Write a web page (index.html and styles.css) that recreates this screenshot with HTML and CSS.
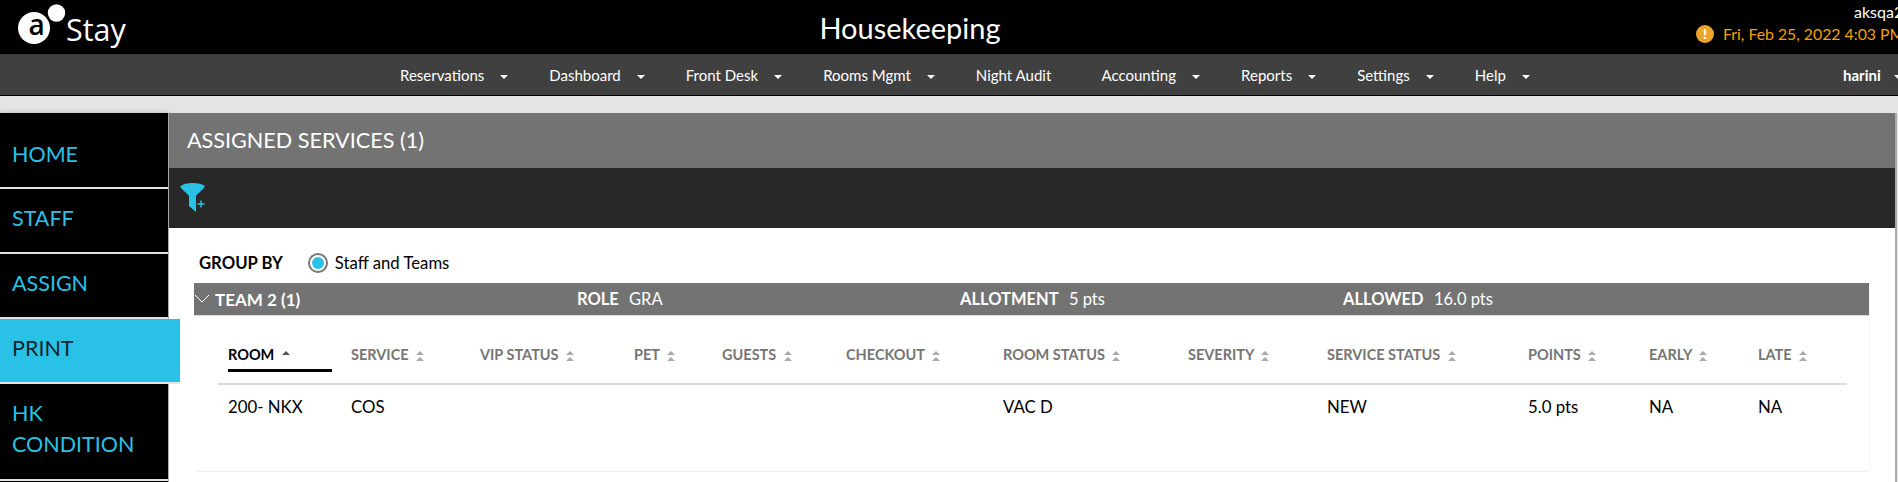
FILE: index.html
```html
<!DOCTYPE html>
<html lang="en">
<head>
    <meta charset="UTF-8">
    <title>Housekeeping</title>
    <link rel="stylesheet" href="styles.css">
</head>
<body>
    <header class="top-bar">
        <div class="logo">
            <svg class="logo-mark" width="56" height="46" viewBox="0 0 56 46">
                <circle cx="16" cy="25" r="16" fill="#fff"/>
                <circle cx="38.5" cy="10" r="11" fill="#000"/>
                <circle cx="38.5" cy="10" r="8.7" fill="#fff"/>
                <text x="10.5" y="32" class="logo-a">a</text>
            </svg>
            <span class="logo-text">Stay</span>
        </div>
        <div class="page-title">Housekeeping</div>
        <div class="top-info">
            <div class="site-name">aksqa2</div>
            <div class="date-line">
                <span class="alert-icon">!</span>
                <span>Fri, Feb 25, 2022 4:03 PM</span>
            </div>
        </div>
    </header>

    <nav class="nav-bar">
        <ul class="nav-menu">
            <li>Reservations <i class="caret"></i></li>
            <li>Dashboard <i class="caret"></i></li>
            <li>Front Desk <i class="caret"></i></li>
            <li>Rooms Mgmt <i class="caret"></i></li>
            <li class="nav-plain">Night Audit</li>
            <li>Accounting <i class="caret"></i></li>
            <li>Reports <i class="caret"></i></li>
            <li>Settings <i class="caret"></i></li>
            <li>Help <i class="caret"></i></li>
        </ul>
        <div class="nav-user">harini <i class="caret"></i></div>
    </nav>

    <div class="layout">
        <aside class="side-menu">
            <a class="side-item side-home">HOME</a>
            <a class="side-item">STAFF</a>
            <a class="side-item">ASSIGN</a>
            <a class="side-item active">PRINT</a>
            <a class="side-item side-tall">HK<br>CONDITION</a>
        </aside>

        <main class="content">
            <div class="content-title">ASSIGNED SERVICES (1)</div>
            <div class="toolbar">
                <svg width="28" height="32" viewBox="0 0 28 32">
                    <path d="M2 4.5 C7 0 22 0 27 4 C25 8 20 11 18 14 L18 30 L11 24 L11 14 C9 11 4 8 2 4.5 Z" fill="#29c2e6"/>
                    <path d="M23 18.5 V25.5 M19.5 22 H26.5" stroke="#29c2e6" stroke-width="1.4" fill="none"/>
                </svg>
            </div>
            <section class="panel">
                <div class="group-by">
                    <span class="group-label">GROUP BY</span>
                    <span class="radio"></span>
                    <span>Staff and Teams</span>
                </div>
                <div class="card">
                    <div class="team-bar">
                        <svg class="chevron" width="16" height="10" viewBox="0 0 16 10">
                            <path d="M1 1 L8 8 L15 1" stroke="#fff" stroke-width="1" fill="none"/>
                        </svg>
                        <b class="team-name">TEAM 2 (1)</b>
                        <span class="team-role"><b>ROLE</b> GRA</span>
                        <span class="team-allot"><b>ALLOTMENT</b> 5 pts</span>
                        <span class="team-allowed"><b>ALLOWED</b> 16.0 pts</span>
                    </div>
                    <table class="rooms">
                        <colgroup>
                            <col class="c1"><col class="c2"><col class="c3"><col class="c4">
                            <col class="c5"><col class="c6"><col class="c7"><col class="c8">
                            <col class="c9"><col class="c10"><col class="c11"><col class="c12">
                        </colgroup>
                        <thead>
                            <tr>
                                <th class="sorted"><span class="room-head">ROOM <i class="sort-up"></i></span></th>
                                <th>SERVICE <i class="sort"></i></th>
                                <th>VIP STATUS <i class="sort"></i></th>
                                <th>PET <i class="sort"></i></th>
                                <th>GUESTS <i class="sort"></i></th>
                                <th>CHECKOUT <i class="sort"></i></th>
                                <th>ROOM STATUS <i class="sort"></i></th>
                                <th>SEVERITY <i class="sort"></i></th>
                                <th>SERVICE STATUS <i class="sort"></i></th>
                                <th>POINTS <i class="sort"></i></th>
                                <th>EARLY <i class="sort"></i></th>
                                <th>LATE <i class="sort"></i></th>
                            </tr>
                        </thead>
                        <tbody>
                            <tr>
                                <td>200- NKX</td>
                                <td>COS</td>
                                <td></td>
                                <td></td>
                                <td></td>
                                <td></td>
                                <td>VAC D</td>
                                <td></td>
                                <td>NEW</td>
                                <td>5.0 pts</td>
                                <td>NA</td>
                                <td>NA</td>
                            </tr>
                        </tbody>
                    </table>
                </div>
            </section>
        </main>
    </div>
</body>
</html>
```

FILE: styles.css
```css
html, body {
    height: 100%;
}
body {
    margin: 0;
    overflow: hidden;
    background-color: #e4e4e4;
    font-family: Lato, sans-serif;
    font-size: 16px;
    color: #000;
}

/* top bar */
.top-bar {
    height: 54px;
    background-color: #000;
    color: #fff;
    display: grid;
    grid-template-columns: 1fr auto 1fr;
    align-items: center;
}
.logo {
    display: flex;
    align-items: flex-start;
    padding-left: 18px;
    height: 54px;
}
.logo-mark {
    margin-top: 3px;
}
.logo-a {
    font-family: "Open Sans", sans-serif;
    font-size: 28px;
    font-weight: 600;
    fill: #000;
}
.logo-text {
    font-family: "Open Sans", sans-serif;
    font-size: 30.5px;
    margin-left: -8px;
    margin-top: 9px;
    line-height: 40px;
}
.page-title {
    font-size: 29px;
    padding-right: 78px;
}
.top-info {
    justify-self: end;
    width: 280px;
    margin-right: -3px;
    height: 54px;
    overflow: hidden;
    white-space: nowrap;
}
.site-name {
    font-size: 16px;
    line-height: 24px;
    padding-left: 233px;
}
.date-line {
    display: flex;
    align-items: center;
    gap: 9px;
    font-size: 15.8px;
    color: #f5a000;
    padding-left: 75px;
}
.alert-icon {
    flex: none;
    width: 18px;
    height: 18px;
    border-radius: 50%;
    background-color: #eaa62c;
    color: #fff;
    font-size: 14px;
    font-weight: 900;
    line-height: 18px;
    text-align: center;
}

/* nav */
.nav-bar {
    height: 41px;
    background-color: #404040;
    border-bottom: 1px solid #000;
    color: #fff;
    font-size: 15px;
    display: flex;
    align-items: center;
    position: relative;
}
.nav-menu {
    list-style: none;
    margin: 0;
    padding: 0 0 0 400px;
    display: flex;
    gap: 41.2px;
}
.nav-plain {
    margin-right: 9px;
}
.nav-user {
    margin-left: auto;
    margin-right: -5px;
    width: 60px;
    font-weight: 700;
    white-space: nowrap;
}
.caret {
    display: inline-block;
    width: 0;
    height: 0;
    margin-left: 12px;
    vertical-align: middle;
    border-left: 4px solid transparent;
    border-right: 4px solid transparent;
    border-top: 4px solid #fff;
}
.nav-user .caret {
    margin-left: 10px;
}

/* layout */
.layout {
    display: flex;
    margin-top: 17px;
    height: 369px;
}
.side-menu {
    width: 168px;
    flex: none;
    background-color: #000;
    box-shadow: 0 0 6px rgba(0, 0, 0, 0.2);
}
.side-item {
    display: flex;
    align-items: center;
    height: 58px;
    padding: 0 0 5px 12px;
    font-size: 21.5px;
    color: #29c2e6;
    border-bottom: 2px solid #e4e4e4;
}
.side-home {
    padding: 7px 0 0 12px;
    height: 67px;
}
.side-item.active {
    width: 168px;
    background-color: #29c2e6;
    color: #10262e;
    position: relative;
}
.side-tall {
    height: 90px;
    padding-bottom: 5px;
    line-height: 31px;
}

/* main */
.content {
    flex: 1;
    margin-right: 1px;
    background-color: #fff;
    border-left: 1px solid #aaa;
    border-right: 2px solid #aaa;
    display: flex;
    flex-direction: column;
}
.content-title {
    height: 55px;
    line-height: 55px;
    padding-left: 18px;
    background-color: #737373;
    color: #fff;
    font-size: 21.6px;
}
.toolbar {
    height: 60px;
    background-color: #282828;
    display: flex;
    align-items: center;
    padding-left: 9px;
}
.panel {
    padding: 0 25px;
    flex: 1;
}
.group-by {
    height: 55px;
    display: flex;
    align-items: center;
    padding-left: 5px;
    padding-top: 15px;
    box-sizing: border-box;
    font-size: 16.7px;
}
.group-label {
    font-weight: 700;
    margin-right: 25px;
}
.radio {
    width: 12px;
    height: 12px;
    border-radius: 50%;
    background-color: #29c2e6;
    border: 3px solid #fff;
    outline: 2px solid #777;
    outline-offset: -1px;
    margin: 0 8px 0 1px;
}
.card {
    height: 188px;
    border-bottom: 1px solid #eee;
    border-right: 1px solid #f8f8f8;
    border-radius: 0 0 4px 4px;
}
.team-bar {
    height: 32px;
    background-color: #737373;
    color: #fff;
    border-bottom: 1px solid #ddd;
    display: flex;
    align-items: center;
    position: relative;
    font-size: 16.5px;
}
.team-bar b {
    font-weight: 700;
    margin-right: 6px;
}
.chevron {
    margin-right: 5px;
    flex: none;
}
.team-name {
    width: 356px;
    font-size: 17px;
}
.team-role {
    width: 383px;
}
.team-allot {
    width: 383px;
}

/* table */
.rooms {
    width: 1629px;
    margin: 23px 0 0 24px;
    border-collapse: collapse;
    table-layout: fixed;
}
.c1 { width: 123px; }
.c2 { width: 129px; }
.c3 { width: 154px; }
.c4 { width: 88px; }
.c5 { width: 124px; }
.c6 { width: 157px; }
.c7 { width: 185px; }
.c8 { width: 139px; }
.c9 { width: 201px; }
.c10 { width: 121px; }
.c11 { width: 109px; }
.c12 { width: 99px; }
.rooms th {
    height: 44px;
    padding: 0 0 0 10px;
    text-align: left;
    font-size: 14.5px;
    font-weight: 700;
    color: #757575;
    white-space: nowrap;
    border-bottom: 2px solid #ddd;
    vertical-align: top;
    line-height: 31px;
}
.rooms th.sorted {
    color: #000;
}
.room-head {
    display: block;
    width: 104px;
    height: 30px;
    border-bottom: 3px solid #000;
}
.rooms td {
    padding: 11px 0 0 10px;
    font-size: 16.8px;
    line-height: 22px;
}
.sort,
.sort-up {
    display: inline-block;
    width: 0;
    margin-left: 4px;
    vertical-align: middle;
    border-left: 4px solid transparent;
    border-right: 4px solid transparent;
    border-bottom: 4px solid #aaa;
    position: relative;
    top: -3px;
}
.sort-up {
    border-bottom-color: #555;
}
.sort::after {
    content: "";
    position: absolute;
    left: -4px;
    top: 6px;
    border-left: 4px solid transparent;
    border-right: 4px solid transparent;
    border-bottom: 4px solid #aaa;
}
```
